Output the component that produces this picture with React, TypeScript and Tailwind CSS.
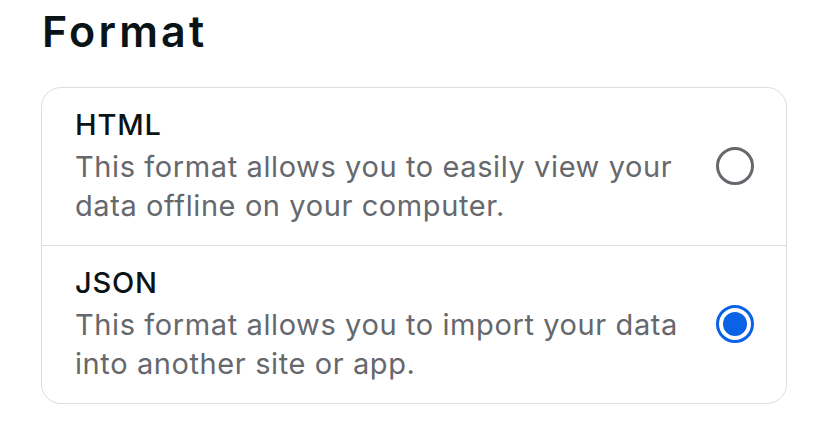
const options = [
  {
    id: "html",
    label: "HTML",
    description: "This format allows you to easily view your data offline on your computer.",
  },
  {
    id: "json",
    label: "JSON",
    description: "This format allows you to import your data into another site or app.",
  },
];

function Radio({ checked }: { checked: boolean }) {
  if (checked) {
    return (
      <span className="flex h-[38px] w-[38px] shrink-0 items-center justify-center rounded-full border-[3.5px] border-[#0a62e6]">
        <span className="h-[24px] w-[24px] rounded-full bg-[#0a62e6]" />
      </span>
    );
  }
  return <span className="h-[38px] w-[38px] shrink-0 rounded-full border-[3.5px] border-[#65686c]" />;
}

export default function App() {
  const selected = "json";

  return (
    <div className="h-[438px] w-[828px] bg-white px-[41px] pt-[6px] font-['Inter',sans-serif]">
      <h2 className="pl-[1px] text-[43px] font-semibold leading-[50px] tracking-[3.2px] text-[#0a1317]">Format</h2>

      {/* Options card */}
      <div className="mt-[31px] w-[746px] overflow-hidden rounded-[20px] border border-[#dadde1]">
        {options.map((opt, i) => (
          <div
            key={opt.id}
            className={
              "flex items-center gap-6 pb-[20px] pl-[33px] pr-[32px] pt-[19px] " +
              (i > 0 ? "border-t border-[#dadde1]" : "")
            }
          >
            <div className="flex-1">
              <p className="text-[29px] font-medium leading-[36px] tracking-[0.8px] text-[#0a1317]">{opt.label}</p>
              <p className="mt-[4px] text-[29px] leading-[39px] tracking-[0.6px] text-[#65686c]">{opt.description}</p>
            </div>
            <Radio checked={opt.id === selected} />
          </div>
        ))}
      </div>
    </div>
  );
}
